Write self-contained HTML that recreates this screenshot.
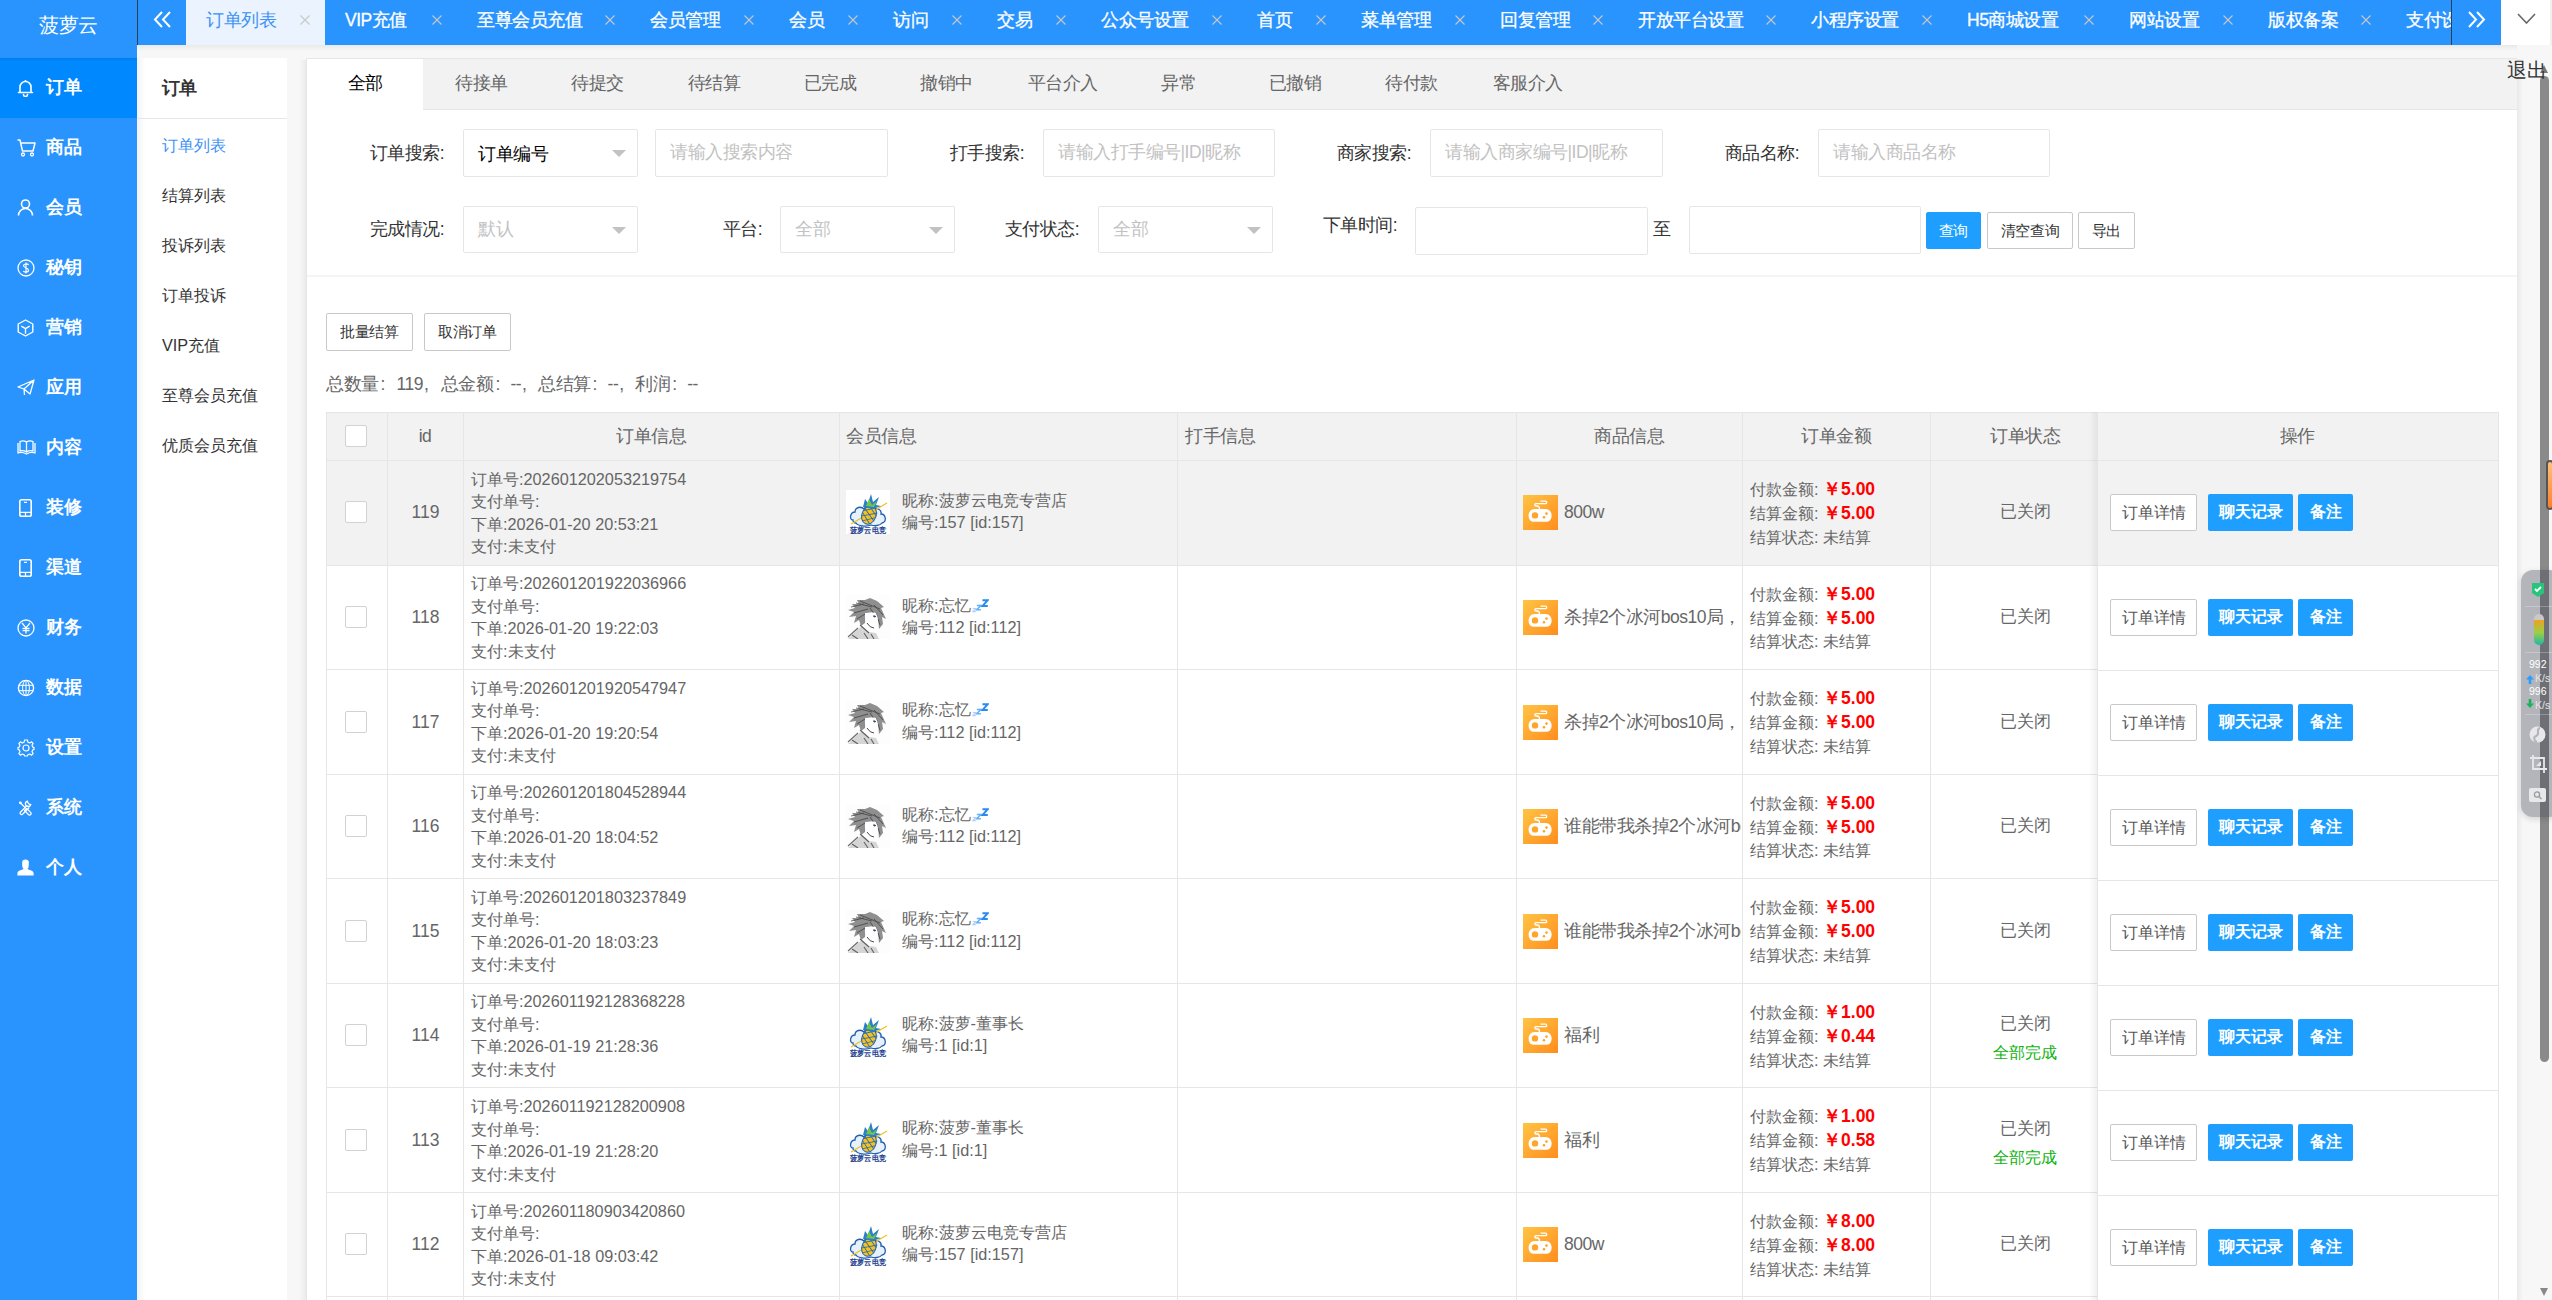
<!DOCTYPE html><html><head><meta charset="utf-8"><title>订单列表</title><style>
*{box-sizing:border-box;margin:0;padding:0}
html,body{width:2552px;height:1300px;overflow:hidden;background:#f7f7f7;font-family:"Liberation Sans",sans-serif;color:#333}
.a{position:absolute}
.t{position:absolute;white-space:nowrap}
#side{left:0;top:0;width:137px;height:1300px;background:#2993fe}
#logo{left:0;top:0;width:137px;height:58px;line-height:50px;text-align:center;color:#fff;font-size:20px;letter-spacing:-0.3px}
.nav{left:0;width:137px;height:60px}
.nav.on{background:#0088ff}
.nav svg{position:absolute;left:17px;top:21px}
.nav span{position:absolute;left:46px;top:0;line-height:58px;font-size:17.5px;font-weight:bold;color:#fff;letter-spacing:-0.5px}
#tabbar{left:137px;top:0;width:2364px;height:45px;background:#2993fe;border-left:1px solid #2f3f50;overflow:hidden}
.tab{position:absolute;top:0;height:45px;color:#fff;font-size:17.5px;letter-spacing:-0.5px;line-height:41px;white-space:nowrap;-webkit-text-stroke:0.3px #fff}
.tab.on{background:#eaf3fe;color:#3d92f3;-webkit-text-stroke:0}
.tab .x{position:absolute;top:15px;width:10px;height:10px}
#sub{left:137px;top:58px;width:150px;height:1242px;background:#fff}
#sub .sh{position:absolute;left:0;top:0;width:8px;height:100%;background:linear-gradient(to right,rgba(0,0,0,0.05),rgba(0,0,0,0))}
.subi{position:absolute;left:25px;font-size:16.25px;color:#333;line-height:24px;white-space:nowrap}
#card{left:307px;top:59px;width:2210px;height:1241px;background:#fff}
#ptabs{left:0;top:0;width:2210px;height:51px;background:#f2f2f2;border-bottom:1px solid #e6e6e6}
.pt{position:absolute;top:0;width:116.25px;height:50px;line-height:48px;text-align:center;font-size:17.5px;letter-spacing:-0.5px;color:#666;white-space:nowrap}
.pt.on{background:#fff;color:#000;height:51px}
.lbl{position:absolute;font-size:17.5px;letter-spacing:-0.5px;color:#333;line-height:24px;white-space:nowrap}
.inp{position:absolute;height:48px;border:1px solid #e6e6e6;border-radius:2px;background:#fff}
.inp .ph{position:absolute;left:14px;top:0;line-height:44px;font-size:17.5px;letter-spacing:-0.5px;color:#c2c2c2;white-space:nowrap}
.inp .tri{position:absolute;right:11px;top:20px;width:0;height:0;border-left:7px solid transparent;border-right:7px solid transparent;border-top:7px solid #c2c2c2}
.btn{position:absolute;height:37px;border:1px solid #c9c9c9;border-radius:2px;background:#fff;color:#333;font-size:15px;line-height:35px;text-align:center;white-space:nowrap;letter-spacing:-0.3px}
.btn.b{background:#1e9fff;border-color:#1e9fff;color:#fff}
#tbl{left:326px;top:412px;width:2173px;height:888px;border-left:1px solid #e6e6e6;border-top:1px solid #e6e6e6;border-right:1px solid #e6e6e6}
.row{position:absolute;left:0;width:2171px;border-bottom:1px solid #e6e6e6}
.vl{position:absolute;top:0;width:1px;height:888px;background:#e6e6e6}
.cell{position:absolute;font-size:16.25px;color:#666;white-space:nowrap;line-height:22.5px}
.cb{position:absolute;width:22px;height:22px;border:1px solid #d2d2d2;border-radius:2px;background:#fff}
.hd{position:absolute;top:0;height:47px;line-height:45px;font-size:17.5px;letter-spacing:-0.5px;color:#666;white-space:nowrap}
.red{color:#f00;font-weight:bold;font-size:17.5px}
.gicon{position:absolute;width:35px;height:35px;background:linear-gradient(135deg,#ffc444,#ff8d1e)}
.ob{position:absolute;height:37px;line-height:35px;font-size:16.25px;text-align:center;border-radius:2px;white-space:nowrap}
.ob.w{border:1px solid #c9c9c9;background:#fff;color:#555}
.ob.b{background:#1e9fff;color:#fff;font-weight:bold}
</style></head><body>
<div id="side" class="a">
<div id="logo" class="a">菠萝云</div>
<div class="a nav on" style="top:58px"><svg width="17" height="18" viewBox="0 0 17 18"><path d="M3 13 V8 a5.5 5.5 0 0 1 11 0 V13 M1.5 13.5 H15.5 M6.5 15.5 a2 2 0 0 0 4 0" fill="none" stroke="#fff" stroke-width="1.6" stroke-linecap="round"/><circle cx="8.5" cy="2" r="1" fill="#fff"/></svg><span>订单</span></div>
<div class="a nav" style="top:118px"><svg width="19" height="18" viewBox="0 0 19 18"><path d="M1 1 L3 1 L5.5 12 H16 L18 4 H4" fill="none" stroke="#fff" stroke-width="1.5" stroke-linejoin="round" stroke-linecap="round"/><circle cx="6" cy="15.5" r="1.5" fill="none" stroke="#fff" stroke-width="1.3"/><circle cx="15" cy="15.5" r="1.5" fill="none" stroke="#fff" stroke-width="1.3"/></svg><span>商品</span></div>
<div class="a nav" style="top:178px"><svg width="17" height="17" viewBox="0 0 17 17"><circle cx="8.5" cy="5" r="4" fill="none" stroke="#fff" stroke-width="1.6"/><path d="M1.5 16.5 a7 7 0 0 1 14 0" fill="none" stroke="#fff" stroke-width="1.6"/></svg><span>会员</span></div>
<div class="a nav" style="top:238px"><svg width="18" height="18" viewBox="0 0 18 18"><circle cx="9" cy="9" r="8" fill="none" stroke="#fff" stroke-width="1.3"/><path d="M11.5 6 C11 4.5 6.5 4.5 6.5 6.8 C6.5 9 11.5 8.5 11.5 11.2 C11.5 13.5 7 13.5 6.3 12 M9 3.5 V14.5" fill="none" stroke="#fff" stroke-width="1.2"/></svg><span>秘钥</span></div>
<div class="a nav" style="top:298px"><svg width="17" height="18" viewBox="0 0 17 18"><path d="M8.5 1 L15.8 5 V13 L8.5 17 L1.2 13 V5 Z M4.3 7.2 L8.5 9.6 L12.7 7.2 M8.5 9.6 V14.8" fill="none" stroke="#fff" stroke-width="1.4" stroke-linejoin="round"/></svg><span>营销</span></div>
<div class="a nav" style="top:358px"><svg width="18" height="17" viewBox="0 0 18 17"><path d="M17 1 L1 8 L7 10 L17 1 L13 15 L7 10 L7.5 16" fill="none" stroke="#fff" stroke-width="1.3" stroke-linejoin="round"/></svg><span>应用</span></div>
<div class="a nav" style="top:418px"><svg width="19" height="16" viewBox="0 0 19 16"><path d="M1 4 V14 Q5 12.5 9.5 15 Q14 12.5 18 14 V4 M3 2.5 Q6.5 1 9.5 3 V13 Q6.5 11 3 12 Z M16 2.5 Q12.5 1 9.5 3 V13 Q12.5 11 16 12 Z" fill="none" stroke="#fff" stroke-width="1.3" stroke-linejoin="round"/></svg><span>内容</span></div>
<div class="a nav" style="top:478px"><svg width="17" height="18" viewBox="0 0 17 18"><rect x="2.8" y="0.8" width="11.4" height="16.4" rx="1.8" fill="none" stroke="#fff" stroke-width="1.6"/><path d="M3 13.3 H14 M8.5 13.3 V17 M7 3.3 H10" stroke="#fff" stroke-width="1.3" fill="none"/></svg><span>装修</span></div>
<div class="a nav" style="top:538px"><svg width="17" height="18" viewBox="0 0 17 18"><rect x="2.8" y="0.8" width="11.4" height="16.4" rx="1.8" fill="none" stroke="#fff" stroke-width="1.6"/><path d="M3 13.3 H14 M8.5 13.3 V17 M7 3.3 H10" stroke="#fff" stroke-width="1.3" fill="none"/></svg><span>渠道</span></div>
<div class="a nav" style="top:598px"><svg width="18" height="18" viewBox="0 0 18 18"><circle cx="9" cy="9" r="8" fill="none" stroke="#fff" stroke-width="1.3"/><path d="M5 4 L9 8.8 L13 4 M9 8.8 V14.5 M5.5 9.3 H12.5 M5.5 11.5 H12.5" fill="none" stroke="#fff" stroke-width="1.3"/></svg><span>财务</span></div>
<div class="a nav" style="top:658px"><svg width="18" height="18" viewBox="0 0 18 18"><circle cx="9" cy="9" r="7.6" fill="none" stroke="#fff" stroke-width="1.4"/><ellipse cx="9" cy="9" rx="3.4" ry="7.6" fill="none" stroke="#fff" stroke-width="1"/><path d="M1.8 6.3 H16.2 M1.8 11.7 H16.2 M9 1.4 V16.6" stroke="#fff" stroke-width="1"/></svg><span>数据</span></div>
<div class="a nav" style="top:718px"><svg width="18" height="18" viewBox="0 0 18 18"><path d="M7.6 1 H10.4 L10.9 3.2 L12.6 4 L14.6 2.9 L16.1 4.4 L15 6.4 L15.8 8.1 L17 8.6 V10.4 L15.8 10.9 L15 12.6 L16.1 14.6 L14.6 16.1 L12.6 15 L10.9 15.8 L10.4 17 H7.6 L7.1 15.8 L5.4 15 L3.4 16.1 L1.9 14.6 L3 12.6 L2.2 10.9 L1 10.4 V8.6 L2.2 8.1 L3 6.4 L1.9 4.4 L3.4 2.9 L5.4 4 L7.1 3.2 Z" fill="none" stroke="#fff" stroke-width="1.2" stroke-linejoin="round"/><circle cx="9" cy="9" r="3" fill="none" stroke="#fff" stroke-width="1.2"/></svg><span>设置</span></div>
<div class="a nav" style="top:778px"><svg width="17" height="17" viewBox="0 0 17 17"><circle cx="3.3" cy="3.8" r="1.4" fill="#fff"/><path d="M3.3 3.8 L8.6 9.1" stroke="#fff" stroke-width="1.3"/><path d="M9.6 9.4 L13.8 13.6 a1.5 1.5 0 0 1 -2.1 2.1 L7.5 11.5 Z" fill="none" stroke="#fff" stroke-width="1.3" stroke-linejoin="round"/><path d="M10.4 2.2 a2.7 2.7 0 1 0 3.3 3.3 L12.2 5.2 L11.2 4.2 Z" fill="none" stroke="#fff" stroke-width="1.3"/><path d="M10.2 6.4 L3.4 13.2 a1.5 1.5 0 0 0 2.1 2.1 L12.3 8.5" fill="none" stroke="#fff" stroke-width="1.3" stroke-linejoin="round"/></svg><span>系统</span></div>
<div class="a nav" style="top:838px"><svg width="17" height="17" viewBox="0 0 17 17"><path d="M5.2 3 Q5.2 0.4 8.5 0.4 Q11.8 0.4 11.8 3 V6.5 Q11.8 8.8 10.3 10 L14.8 11.8 Q16.6 12.5 16.6 14.2 V16.6 H0.4 V14.2 Q0.4 12.5 2.2 11.8 L6.7 10 Q5.2 8.8 5.2 6.5 Z" fill="#fff"/></svg><span>个人</span></div>
<div class="a" style="left:0;top:58px;width:137px;height:3px;background:linear-gradient(rgba(0,60,140,0.18),rgba(0,60,140,0))"></div>
</div>
<div id="tabbar" class="a">
<svg class="a" style="left:15px;top:11px" width="19" height="17" viewBox="0 0 19 17"><path d="M9 1 L2 8.5 L9 16 M17 1 L10 8.5 L17 16" fill="none" stroke="#fff" stroke-width="2"/></svg>
<div class="tab on" style="left:48px;width:139px">
<span class="a" style="left:20px;top:0">订单列表</span>
<svg class="a" style="left:114px;top:15px" width="10" height="10" viewBox="0 0 10 10"><path d="M0.5 0.5 L9.5 9.5 M9.5 0.5 L0.5 9.5" stroke="#c8c8c8" stroke-width="1.1"/></svg>
</div>
<div class="tab" style="left:187px;width:132px">
<span class="a" style="left:20px;top:0">VIP充值</span>
<svg class="a" style="left:107px;top:15px" width="10" height="10" viewBox="0 0 10 10"><path d="M0.5 0.5 L9.5 9.5 M9.5 0.5 L0.5 9.5" stroke="#c8c8c8" stroke-width="1.1"/></svg>
</div>
<div class="tab" style="left:319px;width:173px">
<span class="a" style="left:20px;top:0">至尊会员充值</span>
<svg class="a" style="left:148px;top:15px" width="10" height="10" viewBox="0 0 10 10"><path d="M0.5 0.5 L9.5 9.5 M9.5 0.5 L0.5 9.5" stroke="#c8c8c8" stroke-width="1.1"/></svg>
</div>
<div class="tab" style="left:492px;width:139px">
<span class="a" style="left:20px;top:0">会员管理</span>
<svg class="a" style="left:114px;top:15px" width="10" height="10" viewBox="0 0 10 10"><path d="M0.5 0.5 L9.5 9.5 M9.5 0.5 L0.5 9.5" stroke="#c8c8c8" stroke-width="1.1"/></svg>
</div>
<div class="tab" style="left:631px;width:104px">
<span class="a" style="left:20px;top:0">会员</span>
<svg class="a" style="left:79px;top:15px" width="10" height="10" viewBox="0 0 10 10"><path d="M0.5 0.5 L9.5 9.5 M9.5 0.5 L0.5 9.5" stroke="#c8c8c8" stroke-width="1.1"/></svg>
</div>
<div class="tab" style="left:735px;width:104px">
<span class="a" style="left:20px;top:0">访问</span>
<svg class="a" style="left:79px;top:15px" width="10" height="10" viewBox="0 0 10 10"><path d="M0.5 0.5 L9.5 9.5 M9.5 0.5 L0.5 9.5" stroke="#c8c8c8" stroke-width="1.1"/></svg>
</div>
<div class="tab" style="left:839px;width:104px">
<span class="a" style="left:20px;top:0">交易</span>
<svg class="a" style="left:79px;top:15px" width="10" height="10" viewBox="0 0 10 10"><path d="M0.5 0.5 L9.5 9.5 M9.5 0.5 L0.5 9.5" stroke="#c8c8c8" stroke-width="1.1"/></svg>
</div>
<div class="tab" style="left:943px;width:156px">
<span class="a" style="left:20px;top:0">公众号设置</span>
<svg class="a" style="left:131px;top:15px" width="10" height="10" viewBox="0 0 10 10"><path d="M0.5 0.5 L9.5 9.5 M9.5 0.5 L0.5 9.5" stroke="#c8c8c8" stroke-width="1.1"/></svg>
</div>
<div class="tab" style="left:1099px;width:104px">
<span class="a" style="left:20px;top:0">首页</span>
<svg class="a" style="left:79px;top:15px" width="10" height="10" viewBox="0 0 10 10"><path d="M0.5 0.5 L9.5 9.5 M9.5 0.5 L0.5 9.5" stroke="#c8c8c8" stroke-width="1.1"/></svg>
</div>
<div class="tab" style="left:1203px;width:139px">
<span class="a" style="left:20px;top:0">菜单管理</span>
<svg class="a" style="left:114px;top:15px" width="10" height="10" viewBox="0 0 10 10"><path d="M0.5 0.5 L9.5 9.5 M9.5 0.5 L0.5 9.5" stroke="#c8c8c8" stroke-width="1.1"/></svg>
</div>
<div class="tab" style="left:1342px;width:138px">
<span class="a" style="left:20px;top:0">回复管理</span>
<svg class="a" style="left:113px;top:15px" width="10" height="10" viewBox="0 0 10 10"><path d="M0.5 0.5 L9.5 9.5 M9.5 0.5 L0.5 9.5" stroke="#c8c8c8" stroke-width="1.1"/></svg>
</div>
<div class="tab" style="left:1480px;width:173px">
<span class="a" style="left:20px;top:0">开放平台设置</span>
<svg class="a" style="left:148px;top:15px" width="10" height="10" viewBox="0 0 10 10"><path d="M0.5 0.5 L9.5 9.5 M9.5 0.5 L0.5 9.5" stroke="#c8c8c8" stroke-width="1.1"/></svg>
</div>
<div class="tab" style="left:1653px;width:156px">
<span class="a" style="left:20px;top:0">小程序设置</span>
<svg class="a" style="left:131px;top:15px" width="10" height="10" viewBox="0 0 10 10"><path d="M0.5 0.5 L9.5 9.5 M9.5 0.5 L0.5 9.5" stroke="#c8c8c8" stroke-width="1.1"/></svg>
</div>
<div class="tab" style="left:1809px;width:162px">
<span class="a" style="left:20px;top:0">H5商城设置</span>
<svg class="a" style="left:137px;top:15px" width="10" height="10" viewBox="0 0 10 10"><path d="M0.5 0.5 L9.5 9.5 M9.5 0.5 L0.5 9.5" stroke="#c8c8c8" stroke-width="1.1"/></svg>
</div>
<div class="tab" style="left:1971px;width:139px">
<span class="a" style="left:20px;top:0">网站设置</span>
<svg class="a" style="left:114px;top:15px" width="10" height="10" viewBox="0 0 10 10"><path d="M0.5 0.5 L9.5 9.5 M9.5 0.5 L0.5 9.5" stroke="#c8c8c8" stroke-width="1.1"/></svg>
</div>
<div class="tab" style="left:2110px;width:138px">
<span class="a" style="left:20px;top:0">版权备案</span>
<svg class="a" style="left:113px;top:15px" width="10" height="10" viewBox="0 0 10 10"><path d="M0.5 0.5 L9.5 9.5 M9.5 0.5 L0.5 9.5" stroke="#c8c8c8" stroke-width="1.1"/></svg>
</div>
<div class="tab" style="left:2248px;width:174px">
<span class="a" style="left:20px;top:0">支付设置</span>
<svg class="a" style="left:149px;top:15px" width="10" height="10" viewBox="0 0 10 10"><path d="M0.5 0.5 L9.5 9.5 M9.5 0.5 L0.5 9.5" stroke="#c8c8c8" stroke-width="1.1"/></svg>
</div>
</div>
<div class="a" style="left:2451px;top:0;width:50px;height:45px;background:#2993fe;border-left:1px solid #2f3f50"><svg class="a" style="left:15px;top:11px" width="19" height="17" viewBox="0 0 19 17"><path d="M2 1 L9 8.5 L2 16 M10 1 L17 8.5 L10 16" fill="none" stroke="#fff" stroke-width="2"/></svg></div>
<div class="a" style="left:2501px;top:0;width:51px;height:45px;background:#fff;border-right:2px solid #f0f0f0"><svg class="a" style="left:16px;top:13px" width="19" height="11" viewBox="0 0 19 11"><path d="M1 1 L9.5 10 L18 1" fill="none" stroke="#666" stroke-width="1.6"/></svg></div>
<div class="a" style="left:137px;top:45px;width:2415px;height:6px;background:linear-gradient(rgba(0,0,0,0.06),rgba(0,0,0,0))"></div>
<div id="sub" class="a"><div class="sh"></div>
<div class="subi" style="top:18px;font-weight:bold;font-size:17.5px;letter-spacing:-1px">订单</div>
<div class="a" style="left:0;top:60px;width:150px;height:1px;background:#e6e6e6"></div>
<div class="subi" style="top:75px;color:#3d92f3">订单列表</div>
<div class="subi" style="top:125px;color:#333">结算列表</div>
<div class="subi" style="top:175px;color:#333">投诉列表</div>
<div class="subi" style="top:225px;color:#333">订单投诉</div>
<div class="subi" style="top:275px;color:#333">VIP充值</div>
<div class="subi" style="top:325px;color:#333">至尊会员充值</div>
<div class="subi" style="top:375px;color:#333">优质会员充值</div>
</div>
<div class="a" style="left:299px;top:60px;width:7px;height:1240px;background:linear-gradient(to left,rgba(0,0,0,0.05),rgba(0,0,0,0))"></div>
<div class="a" style="left:306px;top:58px;width:2211px;height:1242px;border-left:1px solid #e6e6e6;border-top:1px solid #e6e6e6"></div>
<div id="card" class="a">
<div id="ptabs" class="a">
<div class="pt on" style="left:0.0px">全部</div>
<div class="pt" style="left:116.25px">待接单</div>
<div class="pt" style="left:232.5px">待提交</div>
<div class="pt" style="left:348.75px">待结算</div>
<div class="pt" style="left:465.0px">已完成</div>
<div class="pt" style="left:581.25px">撤销中</div>
<div class="pt" style="left:697.5px">平台介入</div>
<div class="pt" style="left:813.75px">异常</div>
<div class="pt" style="left:930.0px">已撤销</div>
<div class="pt" style="left:1046.25px">待付款</div>
<div class="pt" style="left:1162.5px">客服介入</div>
</div>
<div class="a" style="left:0;top:216px;width:2210px;height:2px;background:#f5f5f5"></div>
</div>
<div class="lbl" style="right:2108px;top:141px">订单搜索:</div>
<div class="inp" style="left:463px;top:129px;width:175px;height:48px">
<span class="ph" style="color:#000;top:2px">订单编号</span>
<span class="tri"></span>
</div>
<div class="inp" style="left:655px;top:129px;width:233px;height:48px">
<span class="ph">请输入搜索内容</span>
</div>
<div class="lbl" style="right:1528px;top:141px">打手搜索:</div>
<div class="inp" style="left:1043px;top:129px;width:232px;height:48px">
<span class="ph">请输入打手编号|ID|昵称</span>
</div>
<div class="lbl" style="right:1141px;top:141px">商家搜索:</div>
<div class="inp" style="left:1430px;top:129px;width:233px;height:48px">
<span class="ph">请输入商家编号|ID|昵称</span>
</div>
<div class="lbl" style="right:753px;top:141px">商品名称:</div>
<div class="inp" style="left:1818px;top:129px;width:232px;height:48px">
<span class="ph">请输入商品名称</span>
</div>
<div class="lbl" style="right:2108px;top:217px">完成情况:</div>
<div class="inp" style="left:463px;top:206px;width:175px;height:47px">
<span class="ph">默认</span>
<span class="tri"></span>
</div>
<div class="lbl" style="right:1790px;top:217px">平台:</div>
<div class="inp" style="left:780px;top:206px;width:175px;height:47px">
<span class="ph">全部</span>
<span class="tri"></span>
</div>
<div class="lbl" style="right:1473px;top:217px">支付状态:</div>
<div class="inp" style="left:1098px;top:206px;width:175px;height:47px">
<span class="ph">全部</span>
<span class="tri"></span>
</div>
<div class="lbl" style="right:1155px;top:213px">下单时间:</div>
<div class="inp" style="left:1415px;top:207px;width:233px;height:48px">
</div>
<div class="lbl" style="right:882px;top:217px">至</div>
<div class="inp" style="left:1689px;top:206px;width:232px;height:48px">
</div>
<div class="btn b" style="left:1926px;top:212px;width:55px">查询</div>
<div class="btn" style="left:1987px;top:212px;width:86px">清空查询</div>
<div class="btn" style="left:2078px;top:212px;width:57px">导出</div>
<div class="btn" style="left:326px;top:313px;width:87px;height:38px;line-height:36px">批量结算</div>
<div class="btn" style="left:424px;top:313px;width:87px;height:38px;line-height:36px">取消订单</div>
<div class="t" style="left:326px;top:372px;font-size:17.5px;letter-spacing:-0.5px;color:#666;line-height:24px">总数量<span style="display:inline-block;width:18px;padding-left:2px">:</span>119<span style="display:inline-block;width:18px;padding-left:1px">,</span>总金额<span style="display:inline-block;width:17px;padding-left:2px">:</span>--<span style="display:inline-block;width:17px;padding-left:1px">,</span>总结算<span style="display:inline-block;width:17px;padding-left:2px">:</span>--<span style="display:inline-block;width:17px;padding-left:1px">,</span>利润<span style="display:inline-block;width:17px;padding-left:2px">:</span>--</div>
<div class="a" style="left:326px;top:412px;width:2173px;height:48px;background:#f2f2f2"></div>
<div class="a" style="left:326px;top:460px;width:2173px;height:105px;background:#f2f2f2"></div>
<div class="a" style="left:326px;top:412px;width:2173px;height:1px;background:#e6e6e6"></div>
<div class="a" style="left:326px;top:460px;width:1771px;height:1px;background:#e6e6e6"></div>
<div class="a" style="left:326px;top:565px;width:1771px;height:1px;background:#e6e6e6"></div>
<div class="a" style="left:326px;top:669px;width:1771px;height:1px;background:#e6e6e6"></div>
<div class="a" style="left:326px;top:774px;width:1771px;height:1px;background:#e6e6e6"></div>
<div class="a" style="left:326px;top:878px;width:1771px;height:1px;background:#e6e6e6"></div>
<div class="a" style="left:326px;top:983px;width:1771px;height:1px;background:#e6e6e6"></div>
<div class="a" style="left:326px;top:1087px;width:1771px;height:1px;background:#e6e6e6"></div>
<div class="a" style="left:326px;top:1192px;width:1771px;height:1px;background:#e6e6e6"></div>
<div class="a" style="left:326px;top:1296px;width:1771px;height:1px;background:#e6e6e6"></div>
<div class="a" style="left:326px;top:412px;width:1px;height:888px;background:#e6e6e6"></div>
<div class="a" style="left:387px;top:412px;width:1px;height:888px;background:#e6e6e6"></div>
<div class="a" style="left:463px;top:412px;width:1px;height:888px;background:#e6e6e6"></div>
<div class="a" style="left:839px;top:412px;width:1px;height:888px;background:#e6e6e6"></div>
<div class="a" style="left:1177px;top:412px;width:1px;height:888px;background:#e6e6e6"></div>
<div class="a" style="left:1516px;top:412px;width:1px;height:888px;background:#e6e6e6"></div>
<div class="a" style="left:1742px;top:412px;width:1px;height:888px;background:#e6e6e6"></div>
<div class="a" style="left:1930px;top:412px;width:1px;height:888px;background:#e6e6e6"></div>
<div class="a" style="left:345px;top:425px;width:22px;height:22px;border:1px solid #d2d2d2;border-radius:2px;background:#fff"></div>
<div class="hd" style="left:325px;width:200px;text-align:center;top:424px;line-height:24px">id</div>
<div class="hd" style="left:551px;width:200px;text-align:center;top:424px;line-height:24px">订单信息</div>
<div class="hd" style="left:846px;top:424px;line-height:24px">会员信息</div>
<div class="hd" style="left:1185px;top:424px;line-height:24px">打手信息</div>
<div class="hd" style="left:1529px;width:200px;text-align:center;top:424px;line-height:24px">商品信息</div>
<div class="hd" style="left:1736px;width:200px;text-align:center;top:424px;line-height:24px">订单金额</div>
<div class="hd" style="left:1925px;width:200px;text-align:center;top:424px;line-height:24px">订单状态</div>
<div class="cb" style="left:345px;top:501px"></div>
<div class="cell" style="left:388px;width:75px;text-align:center;top:500.48px;line-height:24px;font-size:17.5px">119</div>
<div class="cell" style="left:471px;top:466.73px;line-height:24px;">订单号:202601202053219754</div>
<div class="cell" style="left:471px;top:489.23px;line-height:24px;">支付单号:</div>
<div class="cell" style="left:471px;top:511.73px;line-height:24px;">下单:2026-01-20 20:53:21</div>
<div class="cell" style="left:471px;top:534.23px;line-height:24px;">支付:未支付</div>
<svg class="a" style="left:846px;top:490px" width="44" height="44" viewBox="0 0 44 44"><rect width="44" height="44" fill="#fff"/>
<path d="M7 30 C3 30 4 22 9 22 C9 17 15 16 18 19 C20 15 26 16 27 19 C31 17 36 20 35 24 C40 24 41 32 36 33 C34 36 28 36 25 35 C20 37 12 36 10 33 C8 33 7 32 7 30 Z" fill="#e6f1fb" stroke="#1f5fb0" stroke-width="1.3"/>
<path d="M5 34 L41 13" stroke="#f2c21b" stroke-width="1.3"/>
<g transform="rotate(22 23 25)"><ellipse cx="23" cy="25" rx="7" ry="9.5" fill="#f7c21a" stroke="#1f5fb0" stroke-width="1"/>
<path d="M16 20 L30 29 M16 25 L27 33 M19 16 L30 23 M30 20 L16 29 M30 25 L19 33 M27 16 L16 23" stroke="#2a6bb8" stroke-width="0.9"/></g>
<path d="M17 17 L19 9 L22 13 L25 4 L27 12 L33 7 L30 15 L35 16 L27 19 Z" fill="#2a7fc8"/>
<path d="M20 16 L23 9 L26 15 L31 11 L28 17 Z" fill="#74c44a"/>
<text x="22" y="43" font-size="8" font-weight="bold" fill="#1d3f8f" text-anchor="middle" textLength="36" lengthAdjust="spacingAndGlyphs">菠萝云电竞</text></svg>
<div class="cell" style="left:902px;top:487.98px;line-height:24px;">昵称:菠萝云电竞专营店</div>
<div class="cell" style="left:902px;top:510.48px;line-height:24px;">编号:157 [id:157]</div>
<div class="gicon" style="left:1523px;top:495px"><svg class="a" style="left:0;top:0" width="35" height="35" viewBox="0 0 35 35"><path d="M16.5 14 q0 -3 -2.5 -3 h-1 a1.2 1.2 0 0 1 0 -2.4 h9.5 a1.2 1.2 0 0 0 0 -2.4 h-5" fill="none" stroke="#fff" stroke-width="1.3"/><path d="M11.8 14 H22.4 C26.5 14 28.6 17 28.6 20.4 C28.6 24.5 26.5 26.8 22.4 26.8 H11.8 C7.7 26.8 5.6 24.5 5.6 20.4 C5.6 17 7.7 14 11.8 14 Z" fill="#fff"/><circle cx="12" cy="20.4" r="3.2" fill="#ffa52c"/><circle cx="23.5" cy="18.6" r="1.3" fill="#ffa22a"/><circle cx="21" cy="22.3" r="1.3" fill="#ffa22a"/></svg></div>
<div class="cell" style="left:1564px;top:500.48px;line-height:24px;width:177px;overflow:hidden;font-size:17.5px;letter-spacing:-0.5px">800w</div>
<div class="cell" style="left:1750px;top:476.98px;line-height:24px;">付款金额: <span class="red">￥5.00</span></div>
<div class="cell" style="left:1750px;top:500.98px;line-height:24px;">结算金额: <span class="red">￥5.00</span></div>
<div class="cell" style="left:1750px;top:524.78px;line-height:24px;">结算状态: 未结算</div>
<div class="cell" style="left:1925px;width:200px;text-align:center;top:500.48px;line-height:24px;font-size:17px">已关闭</div>
<div class="cb" style="left:345px;top:606px"></div>
<div class="cell" style="left:388px;width:75px;text-align:center;top:605.02px;line-height:24px;font-size:17.5px">118</div>
<div class="cell" style="left:471px;top:571.27px;line-height:24px;">订单号:202601201922036966</div>
<div class="cell" style="left:471px;top:593.77px;line-height:24px;">支付单号:</div>
<div class="cell" style="left:471px;top:616.27px;line-height:24px;">下单:2026-01-20 19:22:03</div>
<div class="cell" style="left:471px;top:638.77px;line-height:24px;">支付:未支付</div>
<svg class="a" style="left:846px;top:595px" width="44" height="44" viewBox="0 0 44 44"><rect width="44" height="44" fill="#fdfdfd"/>
<path d="M2 15 L9 13 L6 9 L13 9 L11 5 L19 5 L24 3 L31 6 L38 12 L35 13 L40 24 L36 22 L37 29 L33 34 L32 22 L28 17 L20 18 L19 28 L15 31 L13 25 L8 28 L10 21 L3 22 L8 17 Z" fill="#6a6a6a" opacity="0.75"/>
<path d="M5 12 L18 9 M10 8 L26 12 M14 6 L34 14 M8 18 L22 14 M28 10 L37 20 M24 13 L33 26 M11 24 L19 19 M30 18 L34 30" stroke="#3a3a3a" stroke-width="0.9" opacity="0.8"/>
<path d="M19 18 Q18 29 24 34 Q29 33 32 24 L30 18 Z" fill="#fff"/>
<path d="M21 28 Q24 33 28 33 M27 21 l3 0.5" fill="none" stroke="#333" stroke-width="0.9"/>
<circle cx="28.5" cy="21.5" r="0.9" fill="#2a4f8a"/>
<path d="M2 44 L11 35 L16 31 L23 37 L30 38 L33 44 Z" fill="#8a8a8a" opacity="0.35"/>
<path d="M2 42 L12 33 M14 30 L23 38 M6 40 l6 4 M18 38 l4 6 M25 39 l3 5" fill="none" stroke="#444" stroke-width="1.1" opacity="0.8"/></svg>
<div class="cell" style="left:902px;top:592.52px;line-height:24px;">昵称:忘忆</div>
<svg class="a" style="left:972px;top:599px" width="17" height="14" viewBox="0 0 17 14"><path d="M0.8 9.5 h3 l-3 3.2 h3" fill="none" stroke="#b5cdfb" stroke-width="1.2"/><path d="M4.8 6.5 h4 l-4 4.2 h4" fill="none" stroke="#5fb0ff" stroke-width="1.5"/><path d="M10.5 1.2 h5.3 l-5.3 5.8 h5.3" fill="none" stroke="#2a8af0" stroke-width="1.9"/></svg>
<div class="cell" style="left:902px;top:615.02px;line-height:24px;">编号:112 [id:112]</div>
<div class="gicon" style="left:1523px;top:600px"><svg class="a" style="left:0;top:0" width="35" height="35" viewBox="0 0 35 35"><path d="M16.5 14 q0 -3 -2.5 -3 h-1 a1.2 1.2 0 0 1 0 -2.4 h9.5 a1.2 1.2 0 0 0 0 -2.4 h-5" fill="none" stroke="#fff" stroke-width="1.3"/><path d="M11.8 14 H22.4 C26.5 14 28.6 17 28.6 20.4 C28.6 24.5 26.5 26.8 22.4 26.8 H11.8 C7.7 26.8 5.6 24.5 5.6 20.4 C5.6 17 7.7 14 11.8 14 Z" fill="#fff"/><circle cx="12" cy="20.4" r="3.2" fill="#ffa52c"/><circle cx="23.5" cy="18.6" r="1.3" fill="#ffa22a"/><circle cx="21" cy="22.3" r="1.3" fill="#ffa22a"/></svg></div>
<div class="cell" style="left:1564px;top:605.02px;line-height:24px;width:177px;overflow:hidden;font-size:17.5px;letter-spacing:-0.5px">杀掉2个冰河bos10局，</div>
<div class="cell" style="left:1750px;top:581.52px;line-height:24px;">付款金额: <span class="red">￥5.00</span></div>
<div class="cell" style="left:1750px;top:605.52px;line-height:24px;">结算金额: <span class="red">￥5.00</span></div>
<div class="cell" style="left:1750px;top:629.32px;line-height:24px;">结算状态: 未结算</div>
<div class="cell" style="left:1925px;width:200px;text-align:center;top:605.02px;line-height:24px;font-size:17px">已关闭</div>
<div class="cb" style="left:345px;top:711px"></div>
<div class="cell" style="left:388px;width:75px;text-align:center;top:709.58px;line-height:24px;font-size:17.5px">117</div>
<div class="cell" style="left:471px;top:675.83px;line-height:24px;">订单号:202601201920547947</div>
<div class="cell" style="left:471px;top:698.33px;line-height:24px;">支付单号:</div>
<div class="cell" style="left:471px;top:720.83px;line-height:24px;">下单:2026-01-20 19:20:54</div>
<div class="cell" style="left:471px;top:743.33px;line-height:24px;">支付:未支付</div>
<svg class="a" style="left:846px;top:700px" width="44" height="44" viewBox="0 0 44 44"><rect width="44" height="44" fill="#fdfdfd"/>
<path d="M2 15 L9 13 L6 9 L13 9 L11 5 L19 5 L24 3 L31 6 L38 12 L35 13 L40 24 L36 22 L37 29 L33 34 L32 22 L28 17 L20 18 L19 28 L15 31 L13 25 L8 28 L10 21 L3 22 L8 17 Z" fill="#6a6a6a" opacity="0.75"/>
<path d="M5 12 L18 9 M10 8 L26 12 M14 6 L34 14 M8 18 L22 14 M28 10 L37 20 M24 13 L33 26 M11 24 L19 19 M30 18 L34 30" stroke="#3a3a3a" stroke-width="0.9" opacity="0.8"/>
<path d="M19 18 Q18 29 24 34 Q29 33 32 24 L30 18 Z" fill="#fff"/>
<path d="M21 28 Q24 33 28 33 M27 21 l3 0.5" fill="none" stroke="#333" stroke-width="0.9"/>
<circle cx="28.5" cy="21.5" r="0.9" fill="#2a4f8a"/>
<path d="M2 44 L11 35 L16 31 L23 37 L30 38 L33 44 Z" fill="#8a8a8a" opacity="0.35"/>
<path d="M2 42 L12 33 M14 30 L23 38 M6 40 l6 4 M18 38 l4 6 M25 39 l3 5" fill="none" stroke="#444" stroke-width="1.1" opacity="0.8"/></svg>
<div class="cell" style="left:902px;top:697.08px;line-height:24px;">昵称:忘忆</div>
<svg class="a" style="left:972px;top:703px" width="17" height="14" viewBox="0 0 17 14"><path d="M0.8 9.5 h3 l-3 3.2 h3" fill="none" stroke="#b5cdfb" stroke-width="1.2"/><path d="M4.8 6.5 h4 l-4 4.2 h4" fill="none" stroke="#5fb0ff" stroke-width="1.5"/><path d="M10.5 1.2 h5.3 l-5.3 5.8 h5.3" fill="none" stroke="#2a8af0" stroke-width="1.9"/></svg>
<div class="cell" style="left:902px;top:719.58px;line-height:24px;">编号:112 [id:112]</div>
<div class="gicon" style="left:1523px;top:705px"><svg class="a" style="left:0;top:0" width="35" height="35" viewBox="0 0 35 35"><path d="M16.5 14 q0 -3 -2.5 -3 h-1 a1.2 1.2 0 0 1 0 -2.4 h9.5 a1.2 1.2 0 0 0 0 -2.4 h-5" fill="none" stroke="#fff" stroke-width="1.3"/><path d="M11.8 14 H22.4 C26.5 14 28.6 17 28.6 20.4 C28.6 24.5 26.5 26.8 22.4 26.8 H11.8 C7.7 26.8 5.6 24.5 5.6 20.4 C5.6 17 7.7 14 11.8 14 Z" fill="#fff"/><circle cx="12" cy="20.4" r="3.2" fill="#ffa52c"/><circle cx="23.5" cy="18.6" r="1.3" fill="#ffa22a"/><circle cx="21" cy="22.3" r="1.3" fill="#ffa22a"/></svg></div>
<div class="cell" style="left:1564px;top:709.58px;line-height:24px;width:177px;overflow:hidden;font-size:17.5px;letter-spacing:-0.5px">杀掉2个冰河bos10局，</div>
<div class="cell" style="left:1750px;top:686.08px;line-height:24px;">付款金额: <span class="red">￥5.00</span></div>
<div class="cell" style="left:1750px;top:710.08px;line-height:24px;">结算金额: <span class="red">￥5.00</span></div>
<div class="cell" style="left:1750px;top:733.88px;line-height:24px;">结算状态: 未结算</div>
<div class="cell" style="left:1925px;width:200px;text-align:center;top:709.58px;line-height:24px;font-size:17px">已关闭</div>
<div class="cb" style="left:345px;top:815px"></div>
<div class="cell" style="left:388px;width:75px;text-align:center;top:814.12px;line-height:24px;font-size:17.5px">116</div>
<div class="cell" style="left:471px;top:780.37px;line-height:24px;">订单号:202601201804528944</div>
<div class="cell" style="left:471px;top:802.87px;line-height:24px;">支付单号:</div>
<div class="cell" style="left:471px;top:825.37px;line-height:24px;">下单:2026-01-20 18:04:52</div>
<div class="cell" style="left:471px;top:847.87px;line-height:24px;">支付:未支付</div>
<svg class="a" style="left:846px;top:804px" width="44" height="44" viewBox="0 0 44 44"><rect width="44" height="44" fill="#fdfdfd"/>
<path d="M2 15 L9 13 L6 9 L13 9 L11 5 L19 5 L24 3 L31 6 L38 12 L35 13 L40 24 L36 22 L37 29 L33 34 L32 22 L28 17 L20 18 L19 28 L15 31 L13 25 L8 28 L10 21 L3 22 L8 17 Z" fill="#6a6a6a" opacity="0.75"/>
<path d="M5 12 L18 9 M10 8 L26 12 M14 6 L34 14 M8 18 L22 14 M28 10 L37 20 M24 13 L33 26 M11 24 L19 19 M30 18 L34 30" stroke="#3a3a3a" stroke-width="0.9" opacity="0.8"/>
<path d="M19 18 Q18 29 24 34 Q29 33 32 24 L30 18 Z" fill="#fff"/>
<path d="M21 28 Q24 33 28 33 M27 21 l3 0.5" fill="none" stroke="#333" stroke-width="0.9"/>
<circle cx="28.5" cy="21.5" r="0.9" fill="#2a4f8a"/>
<path d="M2 44 L11 35 L16 31 L23 37 L30 38 L33 44 Z" fill="#8a8a8a" opacity="0.35"/>
<path d="M2 42 L12 33 M14 30 L23 38 M6 40 l6 4 M18 38 l4 6 M25 39 l3 5" fill="none" stroke="#444" stroke-width="1.1" opacity="0.8"/></svg>
<div class="cell" style="left:902px;top:801.62px;line-height:24px;">昵称:忘忆</div>
<svg class="a" style="left:972px;top:808px" width="17" height="14" viewBox="0 0 17 14"><path d="M0.8 9.5 h3 l-3 3.2 h3" fill="none" stroke="#b5cdfb" stroke-width="1.2"/><path d="M4.8 6.5 h4 l-4 4.2 h4" fill="none" stroke="#5fb0ff" stroke-width="1.5"/><path d="M10.5 1.2 h5.3 l-5.3 5.8 h5.3" fill="none" stroke="#2a8af0" stroke-width="1.9"/></svg>
<div class="cell" style="left:902px;top:824.12px;line-height:24px;">编号:112 [id:112]</div>
<div class="gicon" style="left:1523px;top:809px"><svg class="a" style="left:0;top:0" width="35" height="35" viewBox="0 0 35 35"><path d="M16.5 14 q0 -3 -2.5 -3 h-1 a1.2 1.2 0 0 1 0 -2.4 h9.5 a1.2 1.2 0 0 0 0 -2.4 h-5" fill="none" stroke="#fff" stroke-width="1.3"/><path d="M11.8 14 H22.4 C26.5 14 28.6 17 28.6 20.4 C28.6 24.5 26.5 26.8 22.4 26.8 H11.8 C7.7 26.8 5.6 24.5 5.6 20.4 C5.6 17 7.7 14 11.8 14 Z" fill="#fff"/><circle cx="12" cy="20.4" r="3.2" fill="#ffa52c"/><circle cx="23.5" cy="18.6" r="1.3" fill="#ffa22a"/><circle cx="21" cy="22.3" r="1.3" fill="#ffa22a"/></svg></div>
<div class="cell" style="left:1564px;top:814.12px;line-height:24px;width:177px;overflow:hidden;font-size:17.5px;letter-spacing:-0.5px">谁能带我杀掉2个冰河bos</div>
<div class="cell" style="left:1750px;top:790.62px;line-height:24px;">付款金额: <span class="red">￥5.00</span></div>
<div class="cell" style="left:1750px;top:814.62px;line-height:24px;">结算金额: <span class="red">￥5.00</span></div>
<div class="cell" style="left:1750px;top:838.42px;line-height:24px;">结算状态: 未结算</div>
<div class="cell" style="left:1925px;width:200px;text-align:center;top:814.12px;line-height:24px;font-size:17px">已关闭</div>
<div class="cb" style="left:345px;top:920px"></div>
<div class="cell" style="left:388px;width:75px;text-align:center;top:918.67px;line-height:24px;font-size:17.5px">115</div>
<div class="cell" style="left:471px;top:884.92px;line-height:24px;">订单号:202601201803237849</div>
<div class="cell" style="left:471px;top:907.42px;line-height:24px;">支付单号:</div>
<div class="cell" style="left:471px;top:929.92px;line-height:24px;">下单:2026-01-20 18:03:23</div>
<div class="cell" style="left:471px;top:952.42px;line-height:24px;">支付:未支付</div>
<svg class="a" style="left:846px;top:909px" width="44" height="44" viewBox="0 0 44 44"><rect width="44" height="44" fill="#fdfdfd"/>
<path d="M2 15 L9 13 L6 9 L13 9 L11 5 L19 5 L24 3 L31 6 L38 12 L35 13 L40 24 L36 22 L37 29 L33 34 L32 22 L28 17 L20 18 L19 28 L15 31 L13 25 L8 28 L10 21 L3 22 L8 17 Z" fill="#6a6a6a" opacity="0.75"/>
<path d="M5 12 L18 9 M10 8 L26 12 M14 6 L34 14 M8 18 L22 14 M28 10 L37 20 M24 13 L33 26 M11 24 L19 19 M30 18 L34 30" stroke="#3a3a3a" stroke-width="0.9" opacity="0.8"/>
<path d="M19 18 Q18 29 24 34 Q29 33 32 24 L30 18 Z" fill="#fff"/>
<path d="M21 28 Q24 33 28 33 M27 21 l3 0.5" fill="none" stroke="#333" stroke-width="0.9"/>
<circle cx="28.5" cy="21.5" r="0.9" fill="#2a4f8a"/>
<path d="M2 44 L11 35 L16 31 L23 37 L30 38 L33 44 Z" fill="#8a8a8a" opacity="0.35"/>
<path d="M2 42 L12 33 M14 30 L23 38 M6 40 l6 4 M18 38 l4 6 M25 39 l3 5" fill="none" stroke="#444" stroke-width="1.1" opacity="0.8"/></svg>
<div class="cell" style="left:902px;top:906.17px;line-height:24px;">昵称:忘忆</div>
<svg class="a" style="left:972px;top:912px" width="17" height="14" viewBox="0 0 17 14"><path d="M0.8 9.5 h3 l-3 3.2 h3" fill="none" stroke="#b5cdfb" stroke-width="1.2"/><path d="M4.8 6.5 h4 l-4 4.2 h4" fill="none" stroke="#5fb0ff" stroke-width="1.5"/><path d="M10.5 1.2 h5.3 l-5.3 5.8 h5.3" fill="none" stroke="#2a8af0" stroke-width="1.9"/></svg>
<div class="cell" style="left:902px;top:928.67px;line-height:24px;">编号:112 [id:112]</div>
<div class="gicon" style="left:1523px;top:914px"><svg class="a" style="left:0;top:0" width="35" height="35" viewBox="0 0 35 35"><path d="M16.5 14 q0 -3 -2.5 -3 h-1 a1.2 1.2 0 0 1 0 -2.4 h9.5 a1.2 1.2 0 0 0 0 -2.4 h-5" fill="none" stroke="#fff" stroke-width="1.3"/><path d="M11.8 14 H22.4 C26.5 14 28.6 17 28.6 20.4 C28.6 24.5 26.5 26.8 22.4 26.8 H11.8 C7.7 26.8 5.6 24.5 5.6 20.4 C5.6 17 7.7 14 11.8 14 Z" fill="#fff"/><circle cx="12" cy="20.4" r="3.2" fill="#ffa52c"/><circle cx="23.5" cy="18.6" r="1.3" fill="#ffa22a"/><circle cx="21" cy="22.3" r="1.3" fill="#ffa22a"/></svg></div>
<div class="cell" style="left:1564px;top:918.67px;line-height:24px;width:177px;overflow:hidden;font-size:17.5px;letter-spacing:-0.5px">谁能带我杀掉2个冰河bos</div>
<div class="cell" style="left:1750px;top:895.17px;line-height:24px;">付款金额: <span class="red">￥5.00</span></div>
<div class="cell" style="left:1750px;top:919.17px;line-height:24px;">结算金额: <span class="red">￥5.00</span></div>
<div class="cell" style="left:1750px;top:942.97px;line-height:24px;">结算状态: 未结算</div>
<div class="cell" style="left:1925px;width:200px;text-align:center;top:918.67px;line-height:24px;font-size:17px">已关闭</div>
<div class="cb" style="left:345px;top:1024px"></div>
<div class="cell" style="left:388px;width:75px;text-align:center;top:1023.22px;line-height:24px;font-size:17.5px">114</div>
<div class="cell" style="left:471px;top:989.47px;line-height:24px;">订单号:202601192128368228</div>
<div class="cell" style="left:471px;top:1011.97px;line-height:24px;">支付单号:</div>
<div class="cell" style="left:471px;top:1034.47px;line-height:24px;">下单:2026-01-19 21:28:36</div>
<div class="cell" style="left:471px;top:1056.97px;line-height:24px;">支付:未支付</div>
<svg class="a" style="left:846px;top:1013px" width="44" height="44" viewBox="0 0 44 44"><rect width="44" height="44" fill="#fff"/>
<path d="M7 30 C3 30 4 22 9 22 C9 17 15 16 18 19 C20 15 26 16 27 19 C31 17 36 20 35 24 C40 24 41 32 36 33 C34 36 28 36 25 35 C20 37 12 36 10 33 C8 33 7 32 7 30 Z" fill="#e6f1fb" stroke="#1f5fb0" stroke-width="1.3"/>
<path d="M5 34 L41 13" stroke="#f2c21b" stroke-width="1.3"/>
<g transform="rotate(22 23 25)"><ellipse cx="23" cy="25" rx="7" ry="9.5" fill="#f7c21a" stroke="#1f5fb0" stroke-width="1"/>
<path d="M16 20 L30 29 M16 25 L27 33 M19 16 L30 23 M30 20 L16 29 M30 25 L19 33 M27 16 L16 23" stroke="#2a6bb8" stroke-width="0.9"/></g>
<path d="M17 17 L19 9 L22 13 L25 4 L27 12 L33 7 L30 15 L35 16 L27 19 Z" fill="#2a7fc8"/>
<path d="M20 16 L23 9 L26 15 L31 11 L28 17 Z" fill="#74c44a"/>
<text x="22" y="43" font-size="8" font-weight="bold" fill="#1d3f8f" text-anchor="middle" textLength="36" lengthAdjust="spacingAndGlyphs">菠萝云电竞</text></svg>
<div class="cell" style="left:902px;top:1010.72px;line-height:24px;">昵称:菠萝-董事长</div>
<div class="cell" style="left:902px;top:1033.22px;line-height:24px;">编号:1 [id:1]</div>
<div class="gicon" style="left:1523px;top:1018px"><svg class="a" style="left:0;top:0" width="35" height="35" viewBox="0 0 35 35"><path d="M16.5 14 q0 -3 -2.5 -3 h-1 a1.2 1.2 0 0 1 0 -2.4 h9.5 a1.2 1.2 0 0 0 0 -2.4 h-5" fill="none" stroke="#fff" stroke-width="1.3"/><path d="M11.8 14 H22.4 C26.5 14 28.6 17 28.6 20.4 C28.6 24.5 26.5 26.8 22.4 26.8 H11.8 C7.7 26.8 5.6 24.5 5.6 20.4 C5.6 17 7.7 14 11.8 14 Z" fill="#fff"/><circle cx="12" cy="20.4" r="3.2" fill="#ffa52c"/><circle cx="23.5" cy="18.6" r="1.3" fill="#ffa22a"/><circle cx="21" cy="22.3" r="1.3" fill="#ffa22a"/></svg></div>
<div class="cell" style="left:1564px;top:1023.22px;line-height:24px;width:177px;overflow:hidden;font-size:17.5px;letter-spacing:-0.5px">福利</div>
<div class="cell" style="left:1750px;top:999.72px;line-height:24px;">付款金额: <span class="red">￥1.00</span></div>
<div class="cell" style="left:1750px;top:1023.72px;line-height:24px;">结算金额: <span class="red">￥0.44</span></div>
<div class="cell" style="left:1750px;top:1047.52px;line-height:24px;">结算状态: 未结算</div>
<div class="cell" style="left:1925px;width:200px;text-align:center;top:1012.22px;line-height:24px;font-size:17px">已关闭</div>
<div class="cell" style="left:1925px;width:200px;text-align:center;top:1040.22px;line-height:24px;font-size:16.25px;color:#0bb20c">全部完成</div>
<div class="cb" style="left:345px;top:1129px"></div>
<div class="cell" style="left:388px;width:75px;text-align:center;top:1127.77px;line-height:24px;font-size:17.5px">113</div>
<div class="cell" style="left:471px;top:1094.02px;line-height:24px;">订单号:202601192128200908</div>
<div class="cell" style="left:471px;top:1116.52px;line-height:24px;">支付单号:</div>
<div class="cell" style="left:471px;top:1139.02px;line-height:24px;">下单:2026-01-19 21:28:20</div>
<div class="cell" style="left:471px;top:1161.52px;line-height:24px;">支付:未支付</div>
<svg class="a" style="left:846px;top:1118px" width="44" height="44" viewBox="0 0 44 44"><rect width="44" height="44" fill="#fff"/>
<path d="M7 30 C3 30 4 22 9 22 C9 17 15 16 18 19 C20 15 26 16 27 19 C31 17 36 20 35 24 C40 24 41 32 36 33 C34 36 28 36 25 35 C20 37 12 36 10 33 C8 33 7 32 7 30 Z" fill="#e6f1fb" stroke="#1f5fb0" stroke-width="1.3"/>
<path d="M5 34 L41 13" stroke="#f2c21b" stroke-width="1.3"/>
<g transform="rotate(22 23 25)"><ellipse cx="23" cy="25" rx="7" ry="9.5" fill="#f7c21a" stroke="#1f5fb0" stroke-width="1"/>
<path d="M16 20 L30 29 M16 25 L27 33 M19 16 L30 23 M30 20 L16 29 M30 25 L19 33 M27 16 L16 23" stroke="#2a6bb8" stroke-width="0.9"/></g>
<path d="M17 17 L19 9 L22 13 L25 4 L27 12 L33 7 L30 15 L35 16 L27 19 Z" fill="#2a7fc8"/>
<path d="M20 16 L23 9 L26 15 L31 11 L28 17 Z" fill="#74c44a"/>
<text x="22" y="43" font-size="8" font-weight="bold" fill="#1d3f8f" text-anchor="middle" textLength="36" lengthAdjust="spacingAndGlyphs">菠萝云电竞</text></svg>
<div class="cell" style="left:902px;top:1115.27px;line-height:24px;">昵称:菠萝-董事长</div>
<div class="cell" style="left:902px;top:1137.77px;line-height:24px;">编号:1 [id:1]</div>
<div class="gicon" style="left:1523px;top:1123px"><svg class="a" style="left:0;top:0" width="35" height="35" viewBox="0 0 35 35"><path d="M16.5 14 q0 -3 -2.5 -3 h-1 a1.2 1.2 0 0 1 0 -2.4 h9.5 a1.2 1.2 0 0 0 0 -2.4 h-5" fill="none" stroke="#fff" stroke-width="1.3"/><path d="M11.8 14 H22.4 C26.5 14 28.6 17 28.6 20.4 C28.6 24.5 26.5 26.8 22.4 26.8 H11.8 C7.7 26.8 5.6 24.5 5.6 20.4 C5.6 17 7.7 14 11.8 14 Z" fill="#fff"/><circle cx="12" cy="20.4" r="3.2" fill="#ffa52c"/><circle cx="23.5" cy="18.6" r="1.3" fill="#ffa22a"/><circle cx="21" cy="22.3" r="1.3" fill="#ffa22a"/></svg></div>
<div class="cell" style="left:1564px;top:1127.77px;line-height:24px;width:177px;overflow:hidden;font-size:17.5px;letter-spacing:-0.5px">福利</div>
<div class="cell" style="left:1750px;top:1104.27px;line-height:24px;">付款金额: <span class="red">￥1.00</span></div>
<div class="cell" style="left:1750px;top:1128.27px;line-height:24px;">结算金额: <span class="red">￥0.58</span></div>
<div class="cell" style="left:1750px;top:1152.07px;line-height:24px;">结算状态: 未结算</div>
<div class="cell" style="left:1925px;width:200px;text-align:center;top:1116.77px;line-height:24px;font-size:17px">已关闭</div>
<div class="cell" style="left:1925px;width:200px;text-align:center;top:1144.77px;line-height:24px;font-size:16.25px;color:#0bb20c">全部完成</div>
<div class="cb" style="left:345px;top:1233px"></div>
<div class="cell" style="left:388px;width:75px;text-align:center;top:1232.33px;line-height:24px;font-size:17.5px">112</div>
<div class="cell" style="left:471px;top:1198.58px;line-height:24px;">订单号:202601180903420860</div>
<div class="cell" style="left:471px;top:1221.08px;line-height:24px;">支付单号:</div>
<div class="cell" style="left:471px;top:1243.58px;line-height:24px;">下单:2026-01-18 09:03:42</div>
<div class="cell" style="left:471px;top:1266.08px;line-height:24px;">支付:未支付</div>
<svg class="a" style="left:846px;top:1222px" width="44" height="44" viewBox="0 0 44 44"><rect width="44" height="44" fill="#fff"/>
<path d="M7 30 C3 30 4 22 9 22 C9 17 15 16 18 19 C20 15 26 16 27 19 C31 17 36 20 35 24 C40 24 41 32 36 33 C34 36 28 36 25 35 C20 37 12 36 10 33 C8 33 7 32 7 30 Z" fill="#e6f1fb" stroke="#1f5fb0" stroke-width="1.3"/>
<path d="M5 34 L41 13" stroke="#f2c21b" stroke-width="1.3"/>
<g transform="rotate(22 23 25)"><ellipse cx="23" cy="25" rx="7" ry="9.5" fill="#f7c21a" stroke="#1f5fb0" stroke-width="1"/>
<path d="M16 20 L30 29 M16 25 L27 33 M19 16 L30 23 M30 20 L16 29 M30 25 L19 33 M27 16 L16 23" stroke="#2a6bb8" stroke-width="0.9"/></g>
<path d="M17 17 L19 9 L22 13 L25 4 L27 12 L33 7 L30 15 L35 16 L27 19 Z" fill="#2a7fc8"/>
<path d="M20 16 L23 9 L26 15 L31 11 L28 17 Z" fill="#74c44a"/>
<text x="22" y="43" font-size="8" font-weight="bold" fill="#1d3f8f" text-anchor="middle" textLength="36" lengthAdjust="spacingAndGlyphs">菠萝云电竞</text></svg>
<div class="cell" style="left:902px;top:1219.83px;line-height:24px;">昵称:菠萝云电竞专营店</div>
<div class="cell" style="left:902px;top:1242.33px;line-height:24px;">编号:157 [id:157]</div>
<div class="gicon" style="left:1523px;top:1227px"><svg class="a" style="left:0;top:0" width="35" height="35" viewBox="0 0 35 35"><path d="M16.5 14 q0 -3 -2.5 -3 h-1 a1.2 1.2 0 0 1 0 -2.4 h9.5 a1.2 1.2 0 0 0 0 -2.4 h-5" fill="none" stroke="#fff" stroke-width="1.3"/><path d="M11.8 14 H22.4 C26.5 14 28.6 17 28.6 20.4 C28.6 24.5 26.5 26.8 22.4 26.8 H11.8 C7.7 26.8 5.6 24.5 5.6 20.4 C5.6 17 7.7 14 11.8 14 Z" fill="#fff"/><circle cx="12" cy="20.4" r="3.2" fill="#ffa52c"/><circle cx="23.5" cy="18.6" r="1.3" fill="#ffa22a"/><circle cx="21" cy="22.3" r="1.3" fill="#ffa22a"/></svg></div>
<div class="cell" style="left:1564px;top:1232.33px;line-height:24px;width:177px;overflow:hidden;font-size:17.5px;letter-spacing:-0.5px">800w</div>
<div class="cell" style="left:1750px;top:1208.83px;line-height:24px;">付款金额: <span class="red">￥8.00</span></div>
<div class="cell" style="left:1750px;top:1232.83px;line-height:24px;">结算金额: <span class="red">￥8.00</span></div>
<div class="cell" style="left:1750px;top:1256.63px;line-height:24px;">结算状态: 未结算</div>
<div class="cell" style="left:1925px;width:200px;text-align:center;top:1232.33px;line-height:24px;font-size:17px">已关闭</div>
<div class="a" style="left:2089px;top:412px;width:8px;height:888px;background:linear-gradient(to left,rgba(0,0,0,0.06),rgba(0,0,0,0))"></div>
<div class="a" style="left:2097px;top:412px;width:402px;height:888px;background:#fff;border-right:1px solid #e6e6e6;border-left:1px solid #e6e6e6"></div>
<div class="a" style="left:2098px;top:412px;width:400px;height:153px;background:#f2f2f2"></div>
<div class="a" style="left:2097px;top:412px;width:402px;height:1px;background:#e6e6e6"></div>
<div class="a" style="left:2097px;top:460px;width:402px;height:1px;background:#e6e6e6"></div>
<div class="a" style="left:2097px;top:565px;width:402px;height:1px;background:#e6e6e6"></div>
<div class="a" style="left:2097px;top:670px;width:402px;height:1px;background:#e6e6e6"></div>
<div class="a" style="left:2097px;top:775px;width:402px;height:1px;background:#e6e6e6"></div>
<div class="a" style="left:2097px;top:880px;width:402px;height:1px;background:#e6e6e6"></div>
<div class="a" style="left:2097px;top:985px;width:402px;height:1px;background:#e6e6e6"></div>
<div class="a" style="left:2097px;top:1090px;width:402px;height:1px;background:#e6e6e6"></div>
<div class="a" style="left:2097px;top:1195px;width:402px;height:1px;background:#e6e6e6"></div>
<div class="a" style="left:2097px;top:1300px;width:402px;height:1px;background:#e6e6e6"></div>
<div class="hd" style="left:2197px;width:200px;text-align:center;top:424px;line-height:24px">操作</div>
<div class="ob w" style="left:2110px;top:494px;width:87px;height:37px">订单详情</div>
<div class="ob b" style="left:2208px;top:494px;width:85px;height:37px">聊天记录</div>
<div class="ob b" style="left:2298px;top:494px;width:55px;height:37px">备注</div>
<div class="ob w" style="left:2110px;top:599px;width:87px;height:37px">订单详情</div>
<div class="ob b" style="left:2208px;top:599px;width:85px;height:37px">聊天记录</div>
<div class="ob b" style="left:2298px;top:599px;width:55px;height:37px">备注</div>
<div class="ob w" style="left:2110px;top:704px;width:87px;height:37px">订单详情</div>
<div class="ob b" style="left:2208px;top:704px;width:85px;height:37px">聊天记录</div>
<div class="ob b" style="left:2298px;top:704px;width:55px;height:37px">备注</div>
<div class="ob w" style="left:2110px;top:809px;width:87px;height:37px">订单详情</div>
<div class="ob b" style="left:2208px;top:809px;width:85px;height:37px">聊天记录</div>
<div class="ob b" style="left:2298px;top:809px;width:55px;height:37px">备注</div>
<div class="ob w" style="left:2110px;top:914px;width:87px;height:37px">订单详情</div>
<div class="ob b" style="left:2208px;top:914px;width:85px;height:37px">聊天记录</div>
<div class="ob b" style="left:2298px;top:914px;width:55px;height:37px">备注</div>
<div class="ob w" style="left:2110px;top:1019px;width:87px;height:37px">订单详情</div>
<div class="ob b" style="left:2208px;top:1019px;width:85px;height:37px">聊天记录</div>
<div class="ob b" style="left:2298px;top:1019px;width:55px;height:37px">备注</div>
<div class="ob w" style="left:2110px;top:1124px;width:87px;height:37px">订单详情</div>
<div class="ob b" style="left:2208px;top:1124px;width:85px;height:37px">聊天记录</div>
<div class="ob b" style="left:2298px;top:1124px;width:55px;height:37px">备注</div>
<div class="ob w" style="left:2110px;top:1229px;width:87px;height:37px">订单详情</div>
<div class="ob b" style="left:2208px;top:1229px;width:85px;height:37px">聊天记录</div>
<div class="ob b" style="left:2298px;top:1229px;width:55px;height:37px">备注</div>
<div class="a" style="left:2517px;top:45px;width:35px;height:1255px;background:#f7f7f7"></div>
<div class="a" style="left:2517px;top:59px;width:6px;height:1241px;background:linear-gradient(to right,rgba(0,0,0,0.06),rgba(0,0,0,0))"></div>
<div class="a" style="left:2540px;top:76px;width:9px;height:986px;background:#8a8a8a;border-radius:5px"></div>
<div class="a" style="left:2540px;top:65px;width:0;height:0;border-left:4.5px solid transparent;border-right:4.5px solid transparent;border-bottom:8px solid #777"></div>
<div class="a" style="left:2540px;top:1288px;width:0;height:0;border-left:4.5px solid transparent;border-right:4.5px solid transparent;border-top:8px solid #888"></div>
<div class="t" style="left:2507px;top:58px;font-size:20px;line-height:24px;color:#333;letter-spacing:0">退出</div>
<div class="a" style="left:2546px;top:460px;width:8px;height:50px;border:2px solid #555;border-radius:4px;background:linear-gradient(#ffc27a,#ff7f2a)"></div>
<div class="a" style="left:2521px;top:570px;width:40px;height:247px;background:#b4b5ba;border-radius:12px;box-shadow:0 2px 6px rgba(0,0,0,0.15)"></div>
<div class="a" style="left:2540px;top:570px;width:9px;height:247px;background:#6e6f74"></div>
<svg class="a" style="left:2531px;top:582px" width="14" height="16" viewBox="0 0 14 16"><path d="M1 1 h12 v10 l-6 4 l-6 -4z" fill="#27c47b"/><path d="M4 7 l2 2 l4 -4" fill="none" stroke="#fff" stroke-width="1.8"/></svg>
<div class="a" style="left:2534px;top:614px;width:10px;height:31px;border-radius:5px;background:linear-gradient(#c9c9cc 0,#c9c9cc 18%,#f0a020 18%,#9bcf45 60%,#1fb5a8 100%)"></div>
<div class="a" style="left:2525px;top:606px;width:27px;height:1px;background:rgba(255,255,255,0.25)"></div>
<div class="a" style="left:2525px;top:652px;width:27px;height:1px;background:rgba(255,255,255,0.25)"></div>
<div class="a" style="left:2525px;top:714px;width:27px;height:1px;background:rgba(255,255,255,0.25)"></div>
<div class="t" style="left:2529px;top:658px;font-size:10.5px;line-height:13px;color:#fff">992</div>
<svg class="a" style="left:2526px;top:675px" width="8" height="9" viewBox="0 0 8 9"><path d="M4 0 L8 4.5 H5.3 V9 H2.7 V4.5 H0 Z" fill="#2a9dff"/></svg>
<div class="t" style="left:2535px;top:672px;font-size:10.5px;line-height:13px;color:#e2e2e6">K/s</div>
<div class="t" style="left:2529px;top:685px;font-size:10.5px;line-height:13px;color:#fff">996</div>
<svg class="a" style="left:2526px;top:699px" width="8" height="9" viewBox="0 0 8 9"><path d="M4 9 L8 4.5 H5.3 V0 H2.7 V4.5 H0 Z" fill="#18b45a"/></svg>
<div class="t" style="left:2535px;top:699px;font-size:10.5px;line-height:13px;color:#e2e2e6">K/s</div>
<svg class="a" style="left:2529px;top:726px" width="17" height="17" viewBox="0 0 17 17"><circle cx="8.5" cy="8.5" r="8" fill="#e8e8ea"/><path d="M11 2 C6 3 12 8 7 10 C4 11 5 15 8 16" fill="none" stroke="#b4b5ba" stroke-width="2"/></svg>
<svg class="a" style="left:2530px;top:755px" width="17" height="18" viewBox="0 0 17 18"><path d="M3 0 V14 H17 M0 3 H14 V18" fill="none" stroke="#e8e8ea" stroke-width="1.8"/><path d="M6 11 L11 6 V11 Z" fill="#e8e8ea"/></svg>
<svg class="a" style="left:2529px;top:788px" width="17" height="14" viewBox="0 0 17 14"><rect width="17" height="14" rx="2" fill="#e8e8ea"/><circle cx="8" cy="6.5" r="2.6" fill="none" stroke="#9a9aa0" stroke-width="1.3"/><path d="M10 8.5 L12.5 11" stroke="#9a9aa0" stroke-width="1.4"/></svg>
</body></html>
